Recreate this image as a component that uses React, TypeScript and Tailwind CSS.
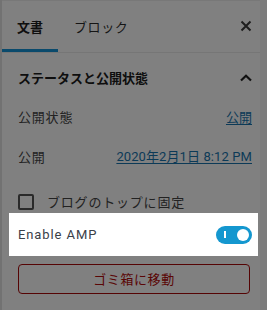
import React from 'react';

const jp = { fontFamily: '"Noto Sans CJK JP", "Noto Sans", sans-serif' };
const latin = { fontFamily: 'Roboto, "Noto Sans CJK JP", sans-serif' };

const App: React.FC = () => {
  return (
    <div className="w-[267px] h-[310px] flex bg-[#7c7c7c] overflow-hidden" style={jp}>
      <div className="w-[2px] h-full bg-[#727272]" />
      <div className="w-[258px] h-full bg-[#808080] flex flex-col">
        {/* tabs */}
        <div className="h-[53px] flex items-stretch border-b border-[#767676] border-t border-t-[#787878]">
          <div className="w-[56px] flex items-center justify-center border-b-[3px] border-[#0a4a6c] pt-[3px]">
            <span className="text-[13px] font-bold text-[#0f0f0f]">文書</span>
          </div>
          <div className="pl-[16px] flex items-center">
            <span className="text-[13px] text-[#151515] tracking-[0.6px]">ブロック</span>
          </div>
          <div className="ml-auto flex items-center justify-end pr-[8px] pb-[1px]">
            <svg width="12" height="12" viewBox="0 0 12 12">
              <path d="M1.5 1.5 L10.5 10.5 M10.5 1.5 L1.5 10.5" stroke="#1e1e1e" strokeWidth="2" />
            </svg>
          </div>
        </div>

        {/* section heading */}
        <div className="h-[50px] flex items-center pl-[16px] pr-[8px]">
          <span className="text-[13px] font-bold text-[#0e0e0e]">ステータスと公開状態</span>
          <svg width="12" height="8" viewBox="0 0 12 8" className="ml-auto">
            <path d="M1 6.5 L6 1.8 L11 6.5" stroke="#111" strokeWidth="2.2" fill="none" />
          </svg>
        </div>

        <div className="h-[28px] flex items-center pl-[16px] pr-[8px] text-[13px] tracking-[0.8px]">
          <span className="text-[#222]">公開状態</span>
          <span className="ml-auto text-[#0c3a57] underline underline-offset-2 tracking-normal">公開</span>
        </div>

        <div className="mt-[12px] h-[28px] flex items-center pl-[16px] pr-[8px] text-[13px] tracking-[0.8px]">
          <span className="text-[#222]">公開</span>
          <span className="ml-auto text-[#0c3a57] underline underline-offset-2 tracking-[0.1px]" style={latin}>
            2020年2月1日 8:12 PM
          </span>
        </div>

        <div className="mt-[20px] h-[22px] flex items-start pl-[16px] pr-[8px]">
          <div className="w-[16px] h-[16px] border-2 border-[#2a2a2a] rounded-[2px] mt-[3px]" />
          <span className="ml-[13px] text-[13px] text-[#222] tracking-[0.8px] leading-[22px]">ブログのトップに固定</span>
        </div>

        {/* highlighted row */}
        <div className="ml-[7px] w-[249px] h-[43px] bg-white flex items-center pl-[9px] pr-[6px]">
          <span className="text-[13px] text-[#3a4048] tracking-[0.9px]" style={latin}>Enable AMP</span>
          <div className="ml-auto w-[36px] h-[18px] rounded-full bg-[#1497cf] flex items-center px-[3px]">
            <div className="ml-[5px] w-[2px] h-[7px] bg-white" />
            <div className="ml-auto w-[12px] h-[12px] rounded-full bg-white" />
          </div>
        </div>

        <div className="mt-[8px] ml-[16px] w-[232px] h-[30px] rounded-[4px] border border-[#550404] flex items-center justify-center">
          <span className="text-[13px] text-[#5a0606] tracking-[0.6px]">ゴミ箱に移動</span>
        </div>
      </div>
    </div>
  );
};

export default App;
